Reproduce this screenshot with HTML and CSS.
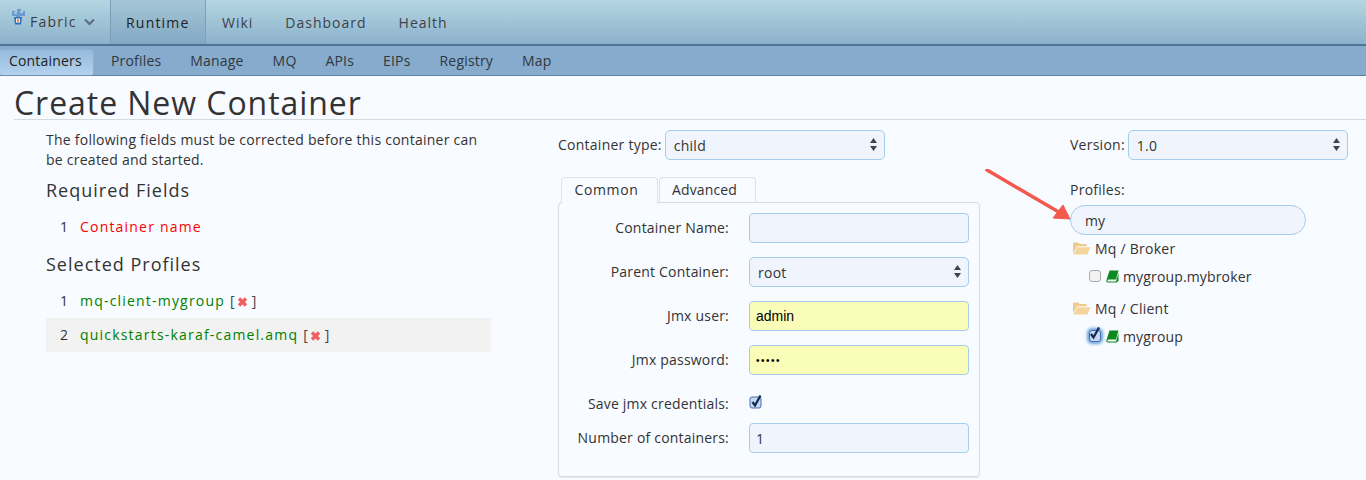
FILE: index.html
```html
<!DOCTYPE html>
<html lang="en">
<head>
<meta charset="utf-8">
<title>Create New Container</title>
<link rel="stylesheet" href="styles.css">
</head>
<body>
<header class="topbar">
  <a class="brand">
    <svg class="logo" width="14" height="17" viewBox="0 0 14 17"><path d="M1 2h3v2h2V0h4v2h-1v2h3V2h2v5H9v2H5V7H1z" fill="#6a9bd0"/><rect x="3" y="3" width="3" height="2" fill="#9cc0e6"/><path d="M3 8h8l-1 7.500H4z" fill="#2f72b8"/><rect x="5" y="9.500" width="4" height="4" fill="#f6efe6"/><rect x="6" y="10.500" width="2" height="2" fill="#e2683c"/></svg>
    <span>Fabric</span>
    <svg class="chev" width="11" height="8" viewBox="0 0 11 8"><path d="M1 1.500l4.500 4.500 4.500-4.500" fill="none" stroke="#5b6b76" stroke-width="2"/></svg>
  </a>
  <a class="tab tab-active">Runtime</a>
  <a class="tab">Wiki</a>
  <a class="tab">Dashboard</a>
  <a class="tab">Health</a>
</header>
<nav class="subbar">
  <a class="sub sub-active">Containers</a>
  <a class="sub">Profiles</a>
  <a class="sub">Manage</a>
  <a class="sub">MQ</a>
  <a class="sub">APIs</a>
  <a class="sub">EIPs</a>
  <a class="sub">Registry</a>
  <a class="sub">Map</a>
</nav>
<main class="page">
  <h1 class="title">Create New Container</h1>
  <div class="columns">
    <section class="left">
      <p class="intro">The following fields must be corrected before this container can be created and started.</p>
      <h2 class="section">Required Fields</h2>
      <div class="row"><span class="num">1</span><span class="err">Container name</span></div>
      <h2 class="section">Selected Profiles</h2>
      <div class="row"><span class="num">1</span><span class="ok">mq-client-mygroup</span><span class="rm">[<svg class="x" width="11" height="10" viewBox="0 0 11 10"><path d="M2 1.500l7 7M9 1.500l-7 7" stroke="#f0605f" stroke-width="3.400"/></svg>]</span></div>
      <div class="row row-alt"><span class="num">2</span><span class="ok">quickstarts-karaf-camel.amq</span><span class="rm">[<svg class="x" width="11" height="10" viewBox="0 0 11 10"><path d="M2 1.500l7 7M9 1.500l-7 7" stroke="#f0605f" stroke-width="3.400"/></svg>]</span></div>
    </section>
    <section class="middle">
      <div class="inline">
        <span class="lbl">Container type:</span>
        <div class="selectbox">child<svg class="updown" width="7" height="13" viewBox="0 0 7 13"><path d="M3.500 0L7 5H0zM3.500 13L0 8h7z" fill="#444"/></svg></div>
      </div>
      <div class="tabs">
        <span class="ftab ftab-on">Common</span>
        <span class="ftab ftab-off">Advanced</span>
      </div>
      <div class="panel">
        <div class="frow"><label class="flabel">Container Name:</label><input class="field" type="text"></div>
        <div class="frow"><label class="flabel">Parent Container:</label><div class="selectbox">root<svg class="updown" width="7" height="13" viewBox="0 0 7 13"><path d="M3.500 0L7 5H0zM3.500 13L0 8h7z" fill="#444"/></svg></div></div>
        <div class="frow"><label class="flabel">Jmx user:</label><input class="field field-auto" type="text" value="admin"></div>
        <div class="frow"><label class="flabel">Jmx password:</label><input class="field field-auto field-pass" type="password" value="admin"></div>
        <div class="frow frow-check"><label class="flabel">Save jmx credentials:</label>
          <svg class="cb" width="14" height="16" viewBox="0 0 14 16"><rect x="1" y="3" width="11" height="11" rx="2" fill="#c6d8f2" stroke="#4a6fa8"/><path d="M3.500 8l2.500 3.500L11.500 1.500" fill="none" stroke="#12284f" stroke-width="2.200"/></svg>
        </div>
        <div class="frow"><label class="flabel">Number of containers:</label><input class="field" type="text" value="1"></div>
      </div>
    </section>
    <section class="right">
      <div class="inline">
        <span class="lbl">Version:</span>
        <div class="selectbox">1.0<svg class="updown" width="7" height="13" viewBox="0 0 7 13"><path d="M3.500 0L7 5H0zM3.500 13L0 8h7z" fill="#444"/></svg></div>
      </div>
      <div class="profiles-label">Profiles:</div>
      <input class="search" type="text" value="my">
      <div class="tree">
        <div class="group">
          <svg class="folder" width="18" height="13" viewBox="1 1 17 12.500" preserveAspectRatio="none"><path d="M1 12V2.500Q1 1.500 2 1.500h4l1.500 1.500H13q1 0 1 1V5H5L1 12z" fill="#eecb8b"/><path d="M1.500 13L5 6h12.500l-3 7z" fill="#f3d59b"/></svg>
          <span>Mq / Broker</span>
        </div>
        <div class="leaf">
          <span class="box"></span>
          <svg class="book" width="13" height="13" viewBox="0 0 13 13"><path d="M3.500 0.500H12.500L10 9.500H2.500Q1 9.500 1.500 11.500H10L12.500 3V11L10.500 12.500H2Q0 12.500 .3 10.500z" fill="#0d8a1f"/></svg>
          <span>mygroup.mybroker</span>
        </div>
        <div class="group group-next">
          <svg class="folder" width="18" height="13" viewBox="1 1 17 12.500" preserveAspectRatio="none"><path d="M1 12V2.500Q1 1.500 2 1.500h4l1.500 1.500H13q1 0 1 1V5H5L1 12z" fill="#eecb8b"/><path d="M1.500 13L5 6h12.500l-3 7z" fill="#f3d59b"/></svg>
          <span>Mq / Client</span>
        </div>
        <div class="leaf">
          <span class="box box-on"><svg width="14" height="16" viewBox="0 0 14 16"><path d="M3 8l2.500 3.500L11 1.500" fill="none" stroke="#12284f" stroke-width="2.200"/></svg></span>
          <svg class="book" width="13" height="13" viewBox="0 0 13 13"><path d="M3.500 0.500H12.500L10 9.500H2.500Q1 9.500 1.500 11.500H10L12.500 3V11L10.500 12.500H2Q0 12.500 .3 10.500z" fill="#0d8a1f"/></svg>
          <span>mygroup</span>
        </div>
      </div>
    </section>
  </div>
  <svg class="arrow" width="90" height="60" viewBox="0 0 90 60"><path d="M2 1L72 42" stroke="#f3594c" stroke-width="3.500" stroke-linecap="round"/><path d="M85 50L68 49 78 36z" fill="#f3594c" stroke="#f3594c" stroke-linejoin="round"/></svg>
</main>
</body>
</html>
```
FILE: styles.css
```css
* { box-sizing: border-box; }
html, body { margin: 0; padding: 0; }
body {
  background: #f8fbff;
  color: #333;
  font-family: "Open Sans", sans-serif;
  font-size: 14px;
  letter-spacing: 0.250px;
  height: 480px;
  overflow: hidden;
}
.topbar {
  display: flex;
  height: 46px;
  padding-left: 11px;
  background: linear-gradient(#b4d6e2, #8cb2cc);
  border-bottom: 2px solid #4d7596;
  letter-spacing: 1px;
  color: #333;
  line-height: 46px;
}
.brand { display: flex; align-items: center; width: 99px; color: #3d3d3d; letter-spacing: 1.200px; }
.logo { margin: -9px 5px 0 0; }
.chev { margin-left: 7px; }
.tab { padding: 0 16px; font-size: 14px; color: #3c4248; }
.tab-active {
  width: 96px;
  padding: 0 15px;
  color: #222;
  letter-spacing: 1.200px;
  background: linear-gradient(#a4c6d6, #82a8c3);
  border-left: 1px solid #7da0b8;
  border-right: 1px solid #7da0b8;
}
.subbar {
  display: flex;
  height: 30px;
  padding-top: 4px;
  background: #86abcd;
  border-bottom: 1px solid #5f82a0;
  line-height: 22px;
  font-size: 14px;
  letter-spacing: 0.180px;
}
.sub { padding: 0 9px; margin-right: 11px; color: #303840; }
.sub-active {
  width: 93px;
  color: #222;
  margin-right: 9px;
  background: linear-gradient(#97bbdb, #b2d2ee);
  box-shadow: 0 0 2px #a0bfd9;
  border-radius: 2px;
}
.page { position: relative; padding: 0 0 0 14px; }
.title {
  margin: 0;
  height: 44px;
  font-size: 32px;
  line-height: 54px;
  font-weight: 400;
  color: #333;
  border-bottom: 1px solid #d5dadf;
  letter-spacing: 0.950px;
}
.columns { display: grid; grid-template-columns: 445px 422px 278px; column-gap: 67px; padding-left: 32px; }
.left { padding-top: 10px; }
.intro { margin: 0; line-height: 20px; width: 440px; }
.section { margin: 7px 0 0; font-size: 18px; line-height: 26px; font-weight: 400; letter-spacing: 1px; }
.row { display: flex; align-items: center; height: 34px; padding-left: 14px; line-height: 20px; letter-spacing: 1.200px; }
.num { width: 20px; letter-spacing: 0; }
.err { color: #f00; }
.ok { color: #008000; }
.rm { margin-left: 5px; color: #444; letter-spacing: 0; }
.x { margin: 0 4px 0 2px; vertical-align: -1px; }
.row-alt { background: #f2f2f2; }
.section + .row { margin-top: 7px; }
.middle { padding-top: 10px; }
.inline { display: flex; align-items: center; }
.lbl { margin-right: 3px; position: relative; bottom: 1px; }
.selectbox {
  position: relative;
  display: flex;
  align-items: center;
  width: 220px;
  height: 30px;
  padding-left: 8px;
  background: #f0f5fd;
  border: 1px solid #a5cdec;
  border-radius: 5px;
  color: #333;
}
.updown { position: absolute; right: 7px; top: 7px; }
.tabs { display: flex; margin-top: 17px; padding-left: 3px; height: 26px; position: relative; z-index: 1; }
.ftab {
  width: 97px;
  height: 26px;
  margin-right: 1px;
  padding-right: 6px;
  text-align: center;
  line-height: 23px;
  border: 1px solid #dde2e6;
  border-bottom: 0;
  border-radius: 4px 4px 0 0;
}
.ftab-on { height: 27px; background: #f8fbff; letter-spacing: 0.600px; }
.ftab-off { letter-spacing: 0.150px; }
.panel {
  height: 275px;
  margin-top: -1px;
  padding-top: 10px;
  border: 1px solid #d8dde2;
  border-radius: 4px;
  box-shadow: 0 1px 1px #e3e6ea;
}
.frow { display: flex; align-items: center; height: 30px; margin-bottom: 14px; }
.flabel { width: 170px; margin-right: 20px; text-align: right; line-height: 20px; letter-spacing: 0.200px; }
.field {
  width: 220px;
  height: 30px;
  padding: 0 6px;
  font: 14px "Open Sans", sans-serif;
  color: #333;
  background: #f0f5fd;
  border: 1px solid #a5cdec;
  border-radius: 4px;
  outline: 0;
}
.field-auto { background: #fafdb8; color: #000; font-family: "Liberation Sans", sans-serif; }
.field-pass { font-size: 10px; letter-spacing: 1.500px; }
.frow-check { margin-bottom: 4px; }
.cb { align-self: flex-start; margin-top: 5px; }
.search {
  display: block;
  width: 236px;
  height: 30px;
  padding: 0 14px;
  font: 14px "Open Sans", sans-serif;
  color: #333;
  background: #f0f5fd;
  border: 1px solid #a5cdec;
  border-radius: 15px;
  outline: 0;
}
.right { padding-top: 10px; margin-left: 23px; width: 278px; }
.profiles-label { margin-top: 20px; line-height: 20px; margin-bottom: 5px; }
.tree { margin-top: 1px; }
.group { display: flex; align-items: center; height: 24px; padding-left: 3px; }
.group span { margin-left: 4px; }
.leaf { display: flex; align-items: center; height: 30px; margin-top: 1px; padding-left: 19px; letter-spacing: 0.150px; }
.group-next { margin-top: 5px; }
.box {
  position: relative;
  width: 12px;
  height: 12px;
  margin-right: 5px;
  background: #f2f2f2;
  border: 1px solid #aaa;
  border-radius: 3px;
}
.box-on { background: #c6d8f2; border-color: #4a6fa8; box-shadow: 0 0 3px 2px #6ca3e0; }
.box-on svg { position: absolute; left: -2px; top: -5px; }
.book { margin-right: 4px; }
.arrow { position: absolute; left: 985px; top: 93px; }
```
